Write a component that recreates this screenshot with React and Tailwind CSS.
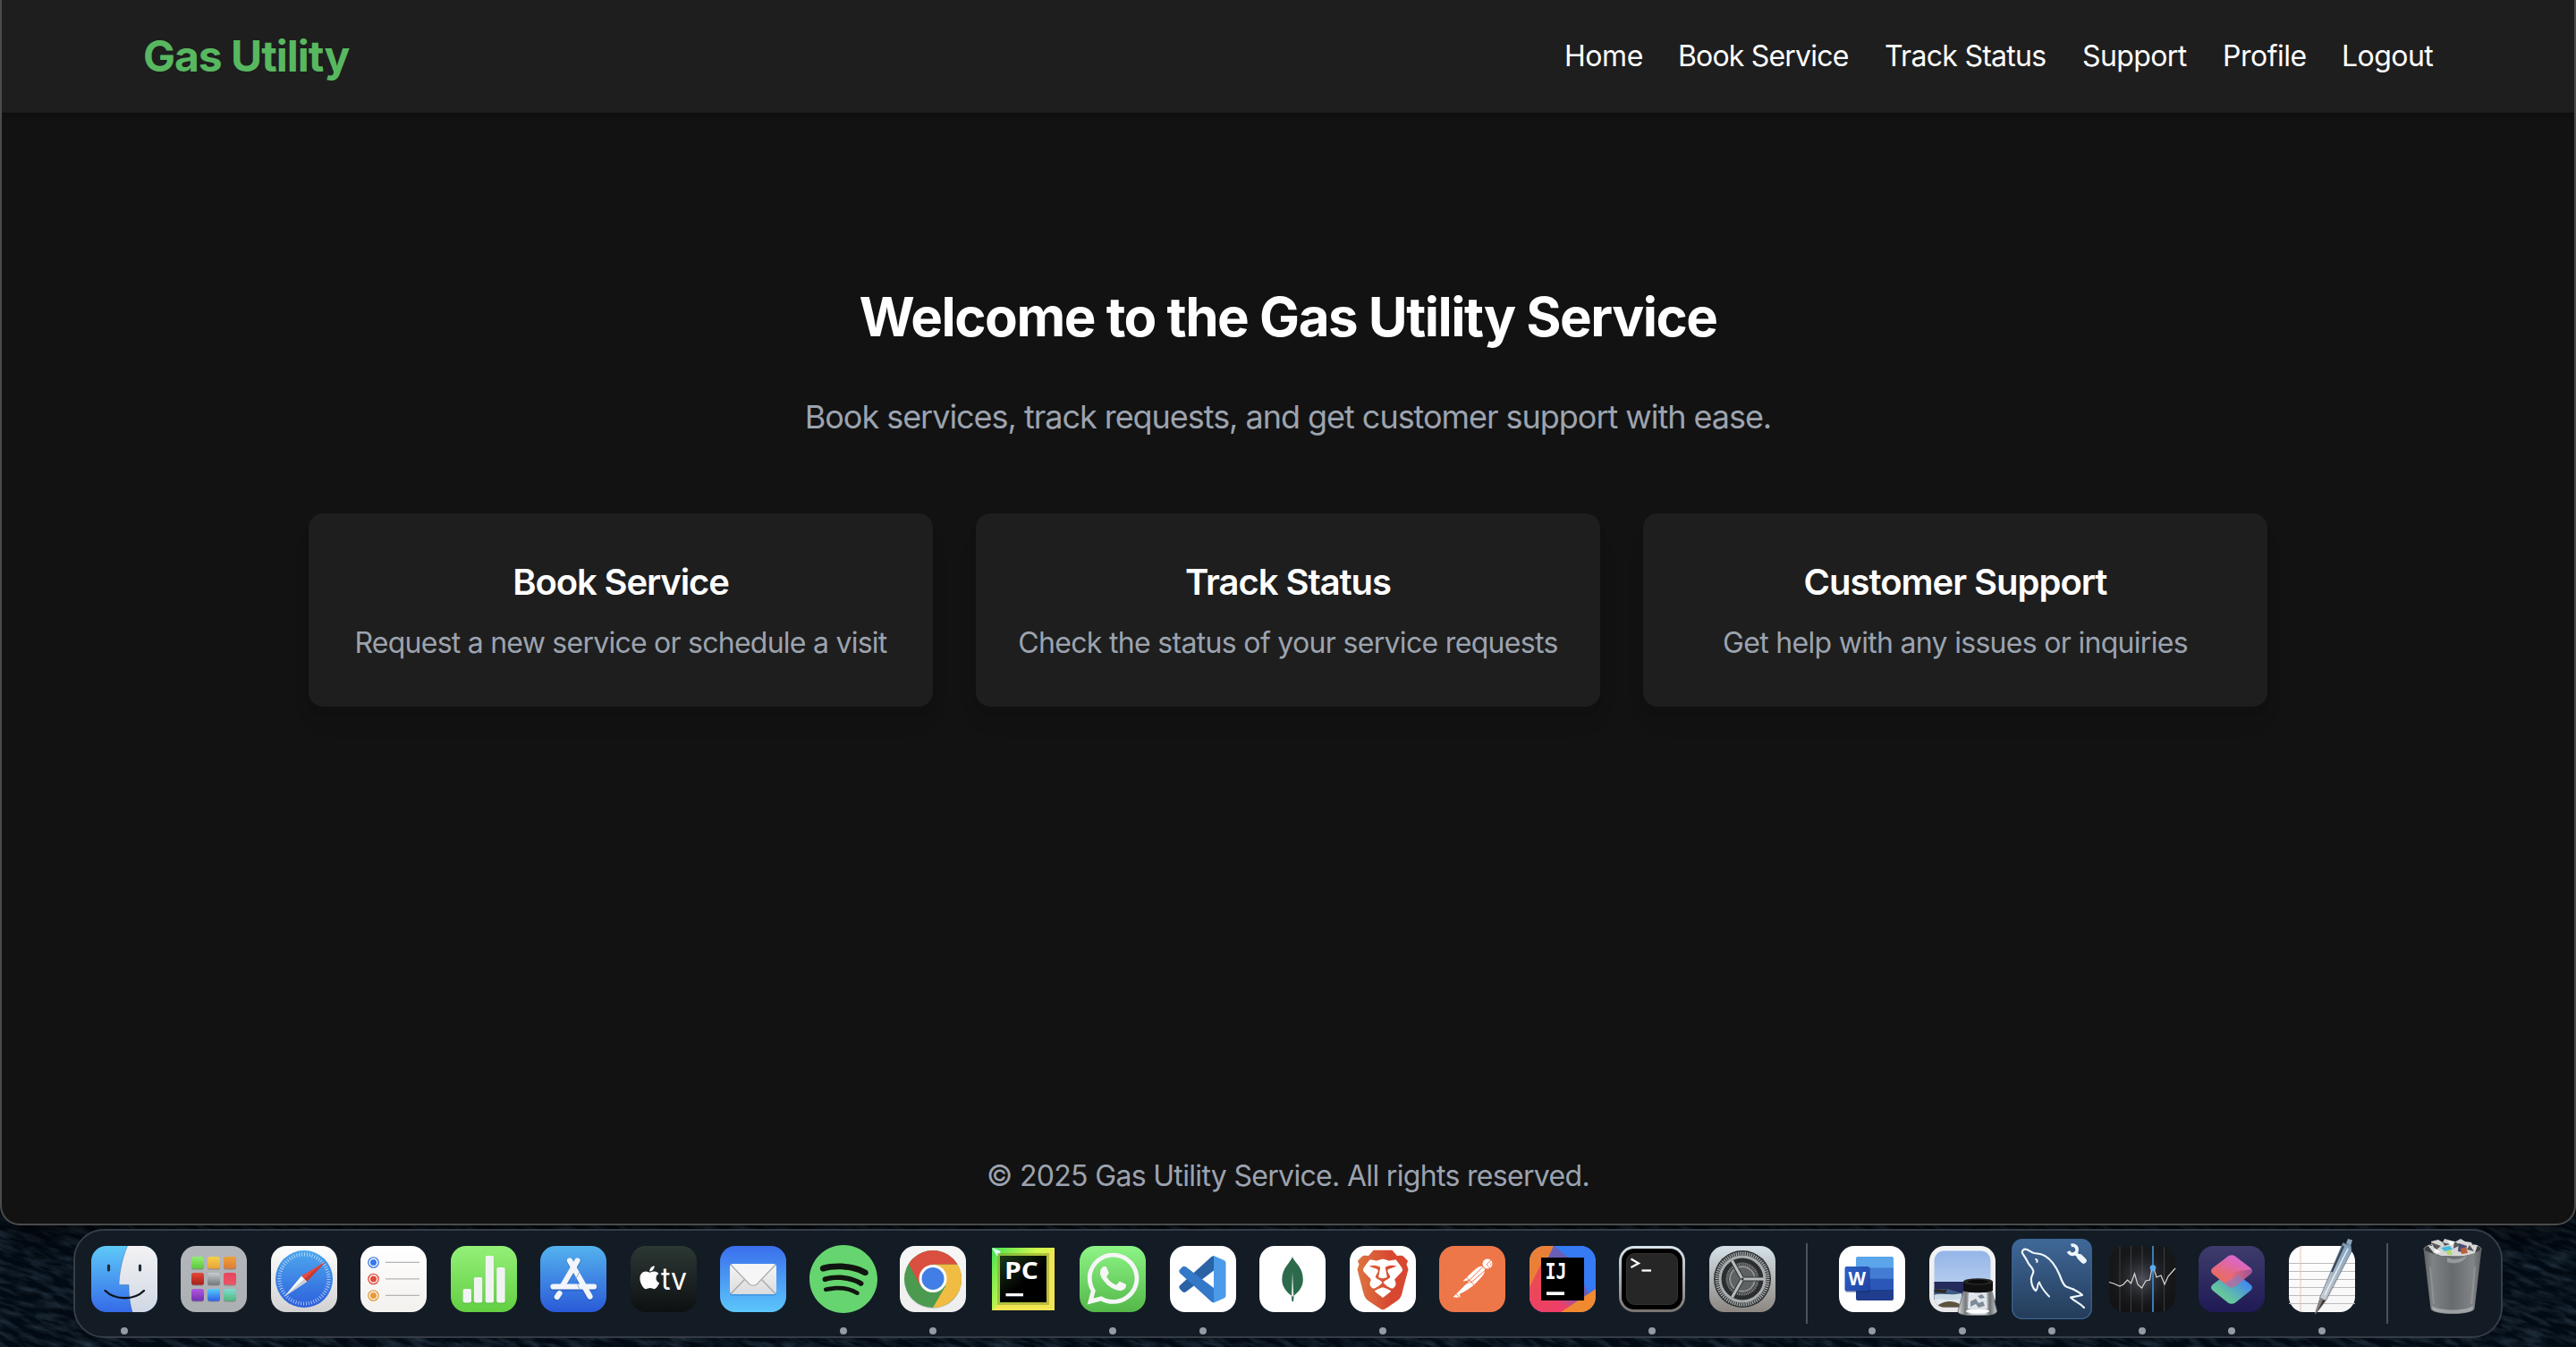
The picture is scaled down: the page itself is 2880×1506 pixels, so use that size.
import React from "react";
import { SiSpotify, SiBrave, SiPostman } from "react-icons/si";
import { FaWhatsapp, FaApple } from "react-icons/fa";

const navItems = [
  { label: "Home", cls: "w-[87px] tracking-[-0.0134em]" },
  { label: "Book Service", cls: "w-[191px] tracking-[-0.0255em]" },
  { label: "Track Status", cls: "w-[181px] tracking-[-0.0225em]" },
  { label: "Support", cls: "w-[117px] tracking-[-0.0186em]" },
  { label: "Profile", cls: "w-[93px] tracking-[-0.0149em]" },
  { label: "Logout", cls: "w-[102px] tracking-[-0.0166em]" },
];

const cards = [
  {
    title: "Book Service",
    text: "Request a new service or schedule a visit",
    titleCls: "tracking-[-0.0285em]",
    textCls: "tracking-[-0.0235em]",
  },
  {
    title: "Track Status",
    text: "Check the status of your service requests",
    titleCls: "tracking-[-0.0266em]",
    textCls: "tracking-[-0.0212em]",
  },
  {
    title: "Customer Support",
    text: "Get help with any issues or inquiries",
    titleCls: "tracking-[-0.0255em]",
    textCls: "tracking-[-0.0218em]",
  },
];

function Grad({ id, from, to, x2 = 0, y2 = 1 }) {
  return (
    <linearGradient id={id} x1="0" y1="0" x2={x2} y2={y2}>
      <stop offset="0" stopColor={from} />
      <stop offset="1" stopColor={to} />
    </linearGradient>
  );
}

function Tile({ id, from, to, children }) {
  return (
    <svg viewBox="0 0 74 74" className="block size-[74px] overflow-visible">
      <defs>
        <Grad id={id} from={from} to={to} />
        <clipPath id={id + "-clip"}>
          <rect width="74" height="74" rx="17" />
        </clipPath>
      </defs>
      <rect width="74" height="74" rx="17" fill={`url(#${id})`} />
      {children}
    </svg>
  );
}

function Finder() {
  return (
    <Tile id="finder" from="#5ec9f8" to="#356be8">
      <defs>
        <Grad id="finder-face" from="#f3f2f4" to="#d0d8e4" />
      </defs>
      <path
        clipPath="url(#finder-clip)"
        d="M40.5 0C35 13 31.500 28 31 43.500H42C42 54 43 64 46 74H74V0Z"
        fill="url(#finder-face)"
      />
      <path d="M40.500 0C35 13 31.500 28 31 43.500H42C42 54 43 64 46 74" fill="none" stroke="#244a86" strokeOpacity=".45" strokeWidth=".8" />
      <path d="M19.500 22v5M54.500 22v5" stroke="#222b35" strokeWidth="3.200" strokeLinecap="round" />
      <path d="M15.500 50C27 61 48 61 59 50" fill="none" stroke="#10151c" strokeWidth="2.400" strokeLinecap="round" />
    </Tile>
  );
}

const padColors = [
  ["#93ee72", "#5cc93c"], ["#f5cf4c", "#eaa436"], ["#eca338", "#e07a34"],
  ["#e5483a", "#a8201a"], ["#c6ced3", "#74797b"], ["#e8445f", "#ec5566"],
  ["#b058de", "#7430b4"], ["#56cdf9", "#2c5fe8"], ["#82dcd2", "#4fb87c"],
];
function Launchpad() {
  return (
    <Tile id="pad" from="#b3b6ba" to="#adb0b3">
      {padColors.map(([a, b], i) => (
        <g key={i}>
          <defs>
            <Grad id={"pad" + i} from={a} to={b} />
          </defs>
          <rect x={12 + (i % 3) * 18} y={12.500 + Math.floor(i / 3) * 18} width="14" height="14" rx="2.800" fill="#5c6064" opacity=".5" />
          <rect x={12 + (i % 3) * 18} y={12 + Math.floor(i / 3) * 18} width="14" height="13.500" rx="2.800" fill={`url(#pad${i})`} />
        </g>
      ))}
    </Tile>
  );
}

function Safari() {
  return (
    <Tile id="saf" from="#ffffff" to="#d2d2d2">
      <defs>
        <Grad id="saf-b" from="#4ea7ee" to="#2d60dc" />
      </defs>
      <circle cx="37" cy="37" r="32" fill="url(#saf-b)" />
      <circle cx="37" cy="37" r="27.500" fill="none" stroke="#fff" strokeOpacity=".7" strokeWidth="4" strokeDasharray=".8 2.079" />
      <path d="M61 17.500L34 33.500L40 40Z" fill="#e5493d" />
      <path d="M61 17.500L37 37L40 40Z" fill="#c23a37" />
      <path d="M15 56.500L34 33.500L40 40Z" fill="#fafafa" />
      <path d="M15 56.500L37 37L40 40Z" fill="#c9cfd6" />
    </Tile>
  );
}

function Reminders() {
  return (
    <Tile id="rem" from="#ffffff" to="#f3f1ee">
      {["#3578ee", "#e4493b", "#e89a37"].map((c, i) => (
        <g key={c}>
          <circle cx="14.500" cy={18.500 + i * 18.500} r="5.700" fill="none" stroke={c} strokeWidth="1.300" />
          <circle cx="14.500" cy={18.500 + i * 18.500} r="3.500" fill={c} />
          <path d={`M28 ${18.300 + i * 18.500}H66`} stroke="#b4b4b6" strokeWidth="1.300" />
        </g>
      ))}
    </Tile>
  );
}

function Numbers() {
  return (
    <Tile id="num" from="#94f078" to="#62cf42">
      {[[13.500, 48], [25.800, 35], [38.600, 11], [51.200, 24]].map(([x, y]) => (
        <g key={x}>
          <rect x={x - 0.500} y={y + 1} width="10.500" height={63.500 - y} rx="2" fill="#3f9a2a" opacity=".35" />
          <rect x={x} y={y} width="9.500" height={63.500 - y} rx="2" fill="#f1f3f2" />
        </g>
      ))}
    </Tile>
  );
}

function AppStore() {
  return (
    <Tile id="as" from="#54b2ee" to="#2a5ad8">
      <g stroke="#1c4cae" strokeOpacity=".4" strokeWidth="7" strokeLinecap="round">
        <path d="M42 17L25 45M33 17L55.500 58M14.500 47H60M21 54L18.500 58" />
      </g>
      <g stroke="#f2f5fa" strokeWidth="6.200" strokeLinecap="round">
        <path d="M33 16.500L55.500 56.500" />
        <path d="M14.500 45.500H60" />
        <path d="M41.500 16.500L25 44.500" />
        <path d="M21.500 53L18.800 57" />
      </g>
      <path d="M44 29L39.500 37M44 48L41 42" stroke="#8fb2e4" strokeWidth="1" />
    </Tile>
  );
}

function AppleTV() {
  return (
    <Tile id="tv" from="#2c3834" to="#0d1012">
      <FaApple x="6.500" y="20.500" size={29.500} color="#fff" />
      <text x="34" y="48.700" fontFamily="Inter, sans-serif" fontSize="34" fontWeight="400" fill="#fff" textLength="29" lengthAdjust="spacingAndGlyphs">tv</text>
    </Tile>
  );
}

function Mail() {
  return (
    <Tile id="mail" from="#3a6eec" to="#5cc6fb">
      <defs>
        <Grad id="mail-e" from="#f5f5f5" to="#dcdcde" />
      </defs>
      <rect x="11" y="21.500" width="52" height="34" rx="3.500" fill="#1f5fae" opacity=".35" />
      <rect x="11" y="20" width="52" height="34" rx="3.500" fill="url(#mail-e)" />
      <path d="M12.500 53L28 37M61.500 53L46 37" stroke="#a5a7aa" strokeWidth="1.200" />
      <path d="M12 21L32 42C35 45 39 45 42 42L62 21" fill="#f6f6f6" stroke="#aaacae" strokeWidth="1.200" />
    </Tile>
  );
}

function Spotify() {
  return (
    <svg viewBox="0 0 76 76" className="-my-px block size-[76px]">
      <circle cx="38" cy="38" r="36" fill="#101510" />
      <SiSpotify size={76} color="#66d56f" />
    </svg>
  );
}

function Chrome() {
  return (
    <Tile id="chr" from="#f7f7f7" to="#eeeeee">
      <circle cx="37" cy="38" r="32" fill="#000" opacity=".18" />
      <circle cx="37" cy="37" r="32" fill="#4b9a50" />
      <path d="M37 20.500H64.500A32 32 0 0 1 37 69L51 45Z" fill="#f0bc42" />
      <path d="M10 20A32 32 0 0 1 64.500 20.500H37L23 45Z" fill="#da4f3f" />
      <circle cx="37" cy="36.500" r="15.500" fill="#fff" />
      <circle cx="37" cy="36.500" r="12.500" fill="#417fe6" />
    </Tile>
  );
}

function PyCharm() {
  return (
    <svg viewBox="0 0 70 70" className="my-[2px] block size-[70px]">
      <defs>
        <linearGradient id="pc-a" x1="0" y1="0" x2="1" y2=".6">
          <stop offset="0" stopColor="#3fe05a" />
          <stop offset=".15" stopColor="#6cea4f" />
          <stop offset=".55" stopColor="#d2f94e" />
          <stop offset="1" stopColor="#f3e751" />
        </linearGradient>
        <Grad id="pc-b" from="#1d3a17" to="#000000" x2=".5" y2=".6" />
      </defs>
      <rect width="70" height="70" fill="url(#pc-a)" />
      <path d="M0 0L10 4L6 10Z" fill="#dffff0" />
      <path d="M0 70L7 63H63V7L70 0V70Z" fill="#f2e552" />
      <rect x="6" y="6" width="58" height="58" fill="#8f9a2e" opacity=".55" />
      <rect x="9" y="9" width="52" height="52" fill="url(#pc-b)" />
      <text x="14" y="34.500" fontFamily="Open Sans, sans-serif" fontSize="27" fontWeight="700" fill="#fff" textLength="38" lengthAdjust="spacingAndGlyphs">PC</text>
      <rect x="15.500" y="51" width="19.500" height="3.300" fill="#fff" />
    </svg>
  );
}

function WhatsApp() {
  return (
    <Tile id="wa" from="#8df486" to="#53b848">
      <FaWhatsapp x="4.500" y="3.500" size={66} color="#f6f6f6" />
    </Tile>
  );
}

function VSCode() {
  return (
    <Tile id="vs" from="#ffffff" to="#ffffff">
      <path d="M49 11V27.500L18 51.200Q15.500 52.800 13.500 50.800L11 48Q9.400 45.800 11.500 43.800L46.500 12Z" fill="#2a62a6" />
      <path d="M49 63.500V47L18 23.400Q15.500 21.800 13.500 23.800L11 26.500Q9.400 28.700 11.500 30.700L46.500 62.500Z" fill="#3478c8" />
      <path d="M49 11L60.500 16Q62.500 17 62.500 19V55.500Q62.500 57.500 60.500 58.500L49 63.500Z" fill="#4b9be9" />
    </Tile>
  );
}

function Mongo() {
  return (
    <Tile id="mg" from="#ffffff" to="#ffffff">
      <path d="M37 12C38.500 18 48.800 23 48.800 37.500C48.800 47 42.500 52.500 38.600 55.500L38 62H36.400L35.800 55.500C31.500 52.500 25.300 46.500 25.300 37.500C25.300 24 35.500 18 37 12Z" fill="#2c6a4c" />
      <path d="M37 29L38.300 55.500L37.200 57L35.900 55.500Z" fill="#dfe8df" />
    </Tile>
  );
}

function Brave() {
  return (
    <Tile id="br" from="#ffffff" to="#ffffff">
      <svg x="3.500" y="4.500" width="67" height="67" viewBox="0 0 24 24">
        <defs>
          <Grad id="br-g" from="#dc7440" to="#d84831" x2={0.650} y2={0} />
        </defs>
        <SiBrave x="0" y="0" size={24} style={{ fill: "url(#br-g)" }} />
      </svg>
    </Tile>
  );
}

function Postman() {
  return (
    <Tile id="pm" from="#ee7749" to="#ee7749">
      <circle cx="37" cy="37" r="32" fill="#fff" />
      <SiPostman x="1" y="1" size={72} color="#ee7749" />
    </Tile>
  );
}

function IntelliJ() {
  return (
    <Tile id="ij" from="#3a78f0" to="#3a66e0">
      <defs>
        <Grad id="ij-p" from="#e9504d" to="#ee3f66" />
        <Grad id="ij-m" from="#ee3f66" to="#3b73ee" x2={1} y2={-0.600} />
      </defs>
      <g clipPath="url(#ij-clip)">
        <path d="M27 0L0 50V74H38L74 46V74H74V0Z" fill="#367af4" />
        <path d="M27 0L10 36L45 74L66 54L50 18Z" fill="#6a5fb6" />
        <path d="M0 36L8 20L46 74H0Z" fill="url(#ij-p)" />
        <path d="M24 58H62L40 74H24Z" fill="url(#ij-m)" />
        <path d="M0 0H27L6 44L0 46Z" fill="#ea8037" />
        <path d="M0 46L13 20V74H0Z" fill="url(#ij-p)" />
        <path d="M74 48V74H35Z" fill="#f08a31" />
      </g>
      <rect x="13" y="13" width="48" height="48" fill="#000" />
      <text x="17.500" y="36.500" fontFamily="DejaVu Sans Mono, monospace" fontSize="24" fontWeight="700" fill="#fff" textLength="24" lengthAdjust="spacingAndGlyphs">IJ</text>
      <rect x="19" y="51.300" width="20" height="3.700" fill="#fff" />
    </Tile>
  );
}

function Terminal() {
  return (
    <Tile id="term" from="#d8e6ec" to="#77746f">
      <rect x="3" y="3" width="68" height="68" rx="14" fill="#000" />
      <rect x="8.500" y="8.500" width="57" height="57" rx="9" fill="#262626" stroke="#3a3a3a" strokeWidth=".8" />
      <path d="M13.500 14.500L22 19.500L13.500 24" fill="none" stroke="#fff" strokeWidth="2.200" />
      <path d="M25.500 27.500H36" stroke="#fff" strokeWidth="2.300" />
    </Tile>
  );
}

function Settings() {
  return (
    <Tile id="set" from="#d6e1e8" to="#8c8781">
      <circle cx="37" cy="37" r="32" fill="#303334" />
      <circle cx="37" cy="37" r="28.500" fill="none" stroke="#a9aeb0" strokeWidth="4" strokeDasharray="1.300 1.184" />
      <circle cx="37" cy="37" r="25" fill="none" stroke="#a8adaf" strokeWidth="3" />
      <circle cx="37" cy="37" r="22.500" fill="#2b2d2e" />
      <circle cx="37" cy="37" r="17" fill="none" stroke="#8b8f90" strokeWidth="3" strokeDasharray="1.100 .876" />
      <circle cx="37" cy="37" r="14" fill="#5f6262" stroke="#8f9394" strokeWidth="2" />
      <path d="M37 37H60M37 37L26 17.500M37 37L26 56.500" stroke="#333536" strokeWidth="5" />
      <path d="M37 37H61M37 37L25.500 16.500M37 37L25.500 57.500" stroke="#b7bcbe" strokeWidth="3" />
      <circle cx="37" cy="37" r="1.500" fill="#333" />
    </Tile>
  );
}

function Word() {
  return (
    <Tile id="wd" from="#ffffff" to="#ffffff">
      <defs>
        <clipPath id="wd-page">
          <rect x="19" y="12" width="42" height="49" rx="2" />
        </clipPath>
        <Grad id="wd-w" from="#2f5fc4" to="#1f44a4" x2={1} />
      </defs>
      <g clipPath="url(#wd-page)">
        <rect x="19" y="12" width="42" height="13" fill="#5ba5ea" />
        <rect x="19" y="24.500" width="42" height="13" fill="#437cd2" />
        <rect x="19" y="36.700" width="42" height="13" fill="#2b58b8" />
        <rect x="19" y="49" width="42" height="12" fill="#1f3d8c" />
      </g>
      <rect x="7" y="24" width="28" height="28" rx="2" fill="#0a1d50" opacity=".35" />
      <rect x="6.500" y="23" width="27.500" height="27.500" rx="2" fill="url(#wd-w)" />
      <text x="10.500" y="44.300" fontFamily="Open Sans, sans-serif" fontSize="21" fontWeight="700" fill="#fff" textLength="19.500" lengthAdjust="spacingAndGlyphs">W</text>
    </Tile>
  );
}

function Preview() {
  return (
    <Tile id="pv" from="#f4f4f4" to="#e8e8ea">
      <defs>
        <Grad id="pv-sky" from="#8fb2e8" to="#b4cbee" />
        <linearGradient id="pv-glass" x1="0" y1="0" x2="1" y2="0">
          <stop offset="0" stopColor="#d9dcde" />
          <stop offset=".2" stopColor="#75797c" />
          <stop offset=".35" stopColor="#d5d9dc" />
          <stop offset=".7" stopColor="#d5d9dc" />
          <stop offset=".82" stopColor="#6d7174" />
          <stop offset="1" stopColor="#c9cccf" />
        </linearGradient>
        <clipPath id="pv-clip2">
          <rect x="5.500" y="5.500" width="63" height="63" rx="11" />
        </clipPath>
      </defs>
      <g clipPath="url(#pv-clip2)">
        <rect width="74" height="42" fill="url(#pv-sky)" />
        <rect y="40" width="74" height="34" fill="#242a5c" />
        <path d="M0 48H20L40 54V60H0Z" fill="#3f5b86" />
        <path d="M5 49C10 47 16 50 20 48L18 53L6 52Z" fill="#2d2a2a" />
        <path d="M5 55C14 52 22 56 36 53V65H5Z" fill="#c9dbe6" />
        <path d="M5 60C14 58 24 62 36 59V70H5Z" fill="#e2ebf0" />
        <path d="M10 66C18 61 26 61 34 65V70H10Z" fill="#5d523e" />
      </g>
      <path d="M38 51H70L75.500 73C75 77 66 77.500 54 77.500S32 77 32 73Z" fill="url(#pv-glass)" stroke="#777c80" strokeWidth="1" />
      <path d="M44 52H64L65 70H43Z" fill="#dfe5ea" />
      <path d="M46 62L52 59L55 64L60 62L62 67L55 69L52 65L46 68ZM54 56L59 54L62 58L57 59Z" fill="#7e8b98" />
      <ellipse cx="54" cy="73" rx="13" ry="2.300" fill="#fff" />
      <path d="M38 40V50C42 53 66 53 71 50V40Z" fill="#101010" />
      <ellipse cx="54.500" cy="40" rx="16.500" ry="3.800" fill="#262626" />
      <ellipse cx="54.500" cy="40" rx="12" ry="2.200" fill="#0b0b0b" />
    </Tile>
  );
}

function MySQL() {
  return (
    <svg viewBox="0 0 90 90" className="-my-2 block size-[90px] shrink-0">
      <defs>
        <Grad id="my-g" from="#3f6898" to="#243c59" />
      </defs>
      <rect x=".7" y=".7" width="88.600" height="88.600" rx="11" fill="url(#my-g)" stroke="#3b6594" strokeWidth="1.200" />
      <g fill="none" stroke="#eef6fc" strokeLinejoin="round" strokeLinecap="round">
        <path strokeWidth="2.200" d="M27 58C24 56 21.500 50 22 44C22.500 40 25.500 38 24 35C22.500 31 20 30 18.500 27C17 23.500 14.500 20 12 16C11.300 12.500 14 11 17 12C20 13 22 15.500 25 16C29 16.500 33 16.500 37 19C45 23.500 50 32 53.500 40C55.500 45 57.500 52 61 53.500L69 56.500" />
        <path strokeWidth="2.200" d="M69 56.500C73 58.500 76 60 79 63C74 64.500 70 64.500 66 65.500C70 70 76 71.500 81 77" />
        <path strokeWidth="2" d="M27 58C30 56 28 51 31 48.500C33.500 56 37 59 42 64.500" />
        <path strokeWidth="2" d="M27 23C28.500 23 29 24.500 28.300 26" />
      </g>
      <path d="M70 15L79 23" stroke="#eef6fc" strokeWidth="4" />
      <path d="M76.500 20.500L80.500 24.500" stroke="#eef6fc" strokeWidth="6.500" strokeLinecap="round" />
      <path d="M66.500 7.500A5 5 0 1 1 63.500 14" fill="none" stroke="#eef6fc" strokeWidth="3.800" />
    </svg>
  );
}

function Activity() {
  return (
    <Tile id="act" from="#17181a" to="#131315">
      <defs>
        <radialGradient id="act-g">
          <stop offset="0" stopColor="#50525e" />
          <stop offset="1" stopColor="#1b1c1e" stopOpacity="0" />
        </radialGradient>
      </defs>
      <rect width="74" height="74" rx="17" fill="url(#act-g)" />
      <path d="M12 1V73M24.500 0V74M37 0V74M61.500 1V73" stroke="#55575c" strokeOpacity=".6" strokeWidth="1" />
      <path d="M49 0V74" stroke="#3f87cc" strokeWidth="1.800" />
      <path d="M0 40.500L5 42L12 45L16 43L20.500 38L24.500 42L28.500 31L32 43L36.500 47L41 39L45.500 38L47.500 27H50.500L53 35L58 33L62 43L66 34L74 25" fill="none" stroke="#d9d9d4" strokeWidth="1.200" />
      <circle cx="49" cy="24.500" r="3.300" fill="#58aef2" />
    </Tile>
  );
}

function Shortcuts() {
  return (
    <Tile id="sc" from="#3e3c6c" to="#1f1a55">
      <defs>
        <linearGradient id="sc-a" x1="0" y1="1" x2=".6" y2="0">
          <stop offset="0" stopColor="#ea6b5c" />
          <stop offset=".3" stopColor="#ea6b5c" />
          <stop offset="1" stopColor="#d866d6" />
        </linearGradient>
        <linearGradient id="sc-b" x1="0" y1="1" x2="1" y2="0">
          <stop offset="0" stopColor="#6fdc8c" />
          <stop offset=".35" stopColor="#63bfa4" />
          <stop offset=".8" stopColor="#3f86f4" />
        </linearGradient>
        <linearGradient id="sc-c" x1="0" y1="0" x2="1" y2="0">
          <stop offset=".35" stopColor="#e86a74" />
          <stop offset="1" stopColor="#854b92" />
        </linearGradient>
      </defs>
      <path d="M33 63.500L16 50Q12 46.500 16 43L33 30Q37 27.500 41 30L58 43Q62 46.500 58 50L41 63.500Q37 66 33 63.500Z" fill="url(#sc-b)" />
      <path d="M33 45L16 31.500Q12 28 16 24.500L33 11.500Q37 9 41 11.500L58 24.500Q62 28 58 31.500L41 45Q37 47.500 33 45Z" fill="url(#sc-a)" />
      <path d="M33 45L24 38L37 29.500L60 26Q60.500 29.500 58 31.500L41 45Q37 47.500 33 45Z" fill="url(#sc-c)" opacity=".75" />
      <path d="M37 46.500Q35 46.500 33 45L29 42L45 32L50 37.500L41 45Q39 46.500 37 46.500Z" fill="#7f7fc8" opacity=".6" />
    </Tile>
  );
}

function TextEdit() {
  return (
    <Tile id="te" from="#ffffff" to="#f6f6f6">
      <defs>
        <Grad id="te-p" from="#7f9fbc" to="#c9ccce" />
      </defs>
      <path d="M0 19.500H74M0 28.500H74M0 37.500H74M0 46.500H74M0 55.500H74M0 64.500H74" stroke="#bcbcbc" strokeWidth="1" />
      <path d="M13 0V74" stroke="#ecc0ba" strokeWidth="1" />
      <path d="M65 1L72 4L42 62L30 77L35 56Z" fill="#000" opacity=".15" />
      <path d="M60.500 -3.500L69.500 0L70 6L41 61L34.500 58Z" fill="url(#te-p)" stroke="#5c7083" strokeWidth=".7" />
      <path d="M64 -3L66 -8L71 -6.500L69 0Z" fill="#89a5bc" />
      <path d="M61 0L48 29" stroke="#38485a" strokeWidth="2.200" />
      <path d="M66 3L40 55" stroke="#e8f0f6" strokeWidth="1.600" />
      <path d="M34.500 58L41 61L31.500 74L29 77L30 72Z" fill="#85807f" />
      <path d="M38 60.500L41 61L31.500 74Z" fill="#3b3030" />
    </Tile>
  );
}

function Trash() {
  return (
    <svg viewBox="0 0 66 86" className="-mt-[7px] block h-[86px] w-[66px] overflow-visible">
      <defs>
        <linearGradient id="tr" x1="0" y1="0" x2="1" y2="0">
          <stop offset="0" stopColor="#5d6062" />
          <stop offset=".15" stopColor="#7f8284" />
          <stop offset=".5" stopColor="#686b6d" />
          <stop offset=".85" stopColor="#828587" />
          <stop offset="1" stopColor="#5d6062" />
        </linearGradient>
      </defs>
      <ellipse cx="33" cy="12.500" rx="32" ry="7.500" fill="#3c4043" stroke="#8a8d8f" strokeWidth="1" />
      <path d="M5 8L10 9L9 4L17 2L22 5L24 1L31 3L35 5L42 1L47 4L54 5L55 8L61 8L58 17L44 21L20 20L12 17Z" fill="#d6d6d6" />
      <path d="M9 5L20 9L14 14ZM35 4L42 8L34 12ZM52 8L57 15L49 13ZM22 5L30 7L24 9Z" fill="#56595b" />
      <path d="M20 11L30 9L33 13L24 15Z" fill="#43b8e0" />
      <path d="M25 15L31 13L33 19L28 19Z" fill="#b6d86a" />
      <path d="M40 6L49 9L47 17L39 15Z" fill="#4a4a76" />
      <path d="M42 12L48 10L50 17L43 18Z" fill="#b8603c" />
      <path d="M28 3L36 4L31 9ZM12 11L20 16L14 17Z" fill="#fff" />
      <path d="M.5 12C5 17 14 20.500 33 20.500S61 17 65.500 12L57.500 79C56 87 10 87 8.500 79Z" fill="url(#tr)" />
      <path d="M27 22C34 25 43 24 49 20C46 28 34 30 27 27Z" fill="#b3b6b8" opacity=".6" />
      <path d="M10 76C18 82 48 82 56 76L55.500 80C50 86 16 86 10.500 80Z" fill="#b8bbbd" opacity=".65" />
      <path d="M8 32L12 74M58 32L54 74" stroke="#a8abad" strokeOpacity=".4" strokeWidth="2" />
    </svg>
  );
}

const leftApps = [
  [Finder, true], [Launchpad], [Safari], [Reminders], [Numbers], [AppStore], [AppleTV], [Mail],
  [Spotify, true], [Chrome, true], [PyCharm], [WhatsApp, true], [VSCode, true], [Mongo],
  [Brave, true], [Postman], [IntelliJ], [Terminal, true], [Settings],
];
const rightApps = [
  [Word, true], [Preview, true], [MySQL, true], [Activity, true], [Shortcuts, true], [TextEdit, true],
];

function DockItem({ icon: Icon, running }) {
  return (
    <div className="flex w-[100.5px] shrink-0 flex-col items-center gap-[17px] pt-[17px]">
      <div className="flex h-[74px] items-center">
        <Icon />
      </div>
      {running && <span className="size-2 rounded-full bg-[#949ba4]" />}
    </div>
  );
}

function Wallpaper() {
  return (
    <svg className="absolute inset-x-0 bottom-0 h-[170px] w-full" preserveAspectRatio="none">
      <defs>
        <filter id="ripples" x="0" y="0" width="100%" height="100%">
          <feTurbulence type="fractalNoise" baseFrequency="0.04 0.16" numOctaves="4" seed="7" />
          <feColorMatrix values="0 0 0 0 0.09  0 0 0 0 0.16  0 0 0 0 0.23  1.500 0 0 0 -0.55" />
        </filter>
      </defs>
      <rect width="100%" height="100%" fill="#020a13" />
      <g transform="rotate(18 1440 85)" opacity=".5">
        <rect x="-200" y="-500" width="3300" height="1200" filter="url(#ripples)" />
      </g>
    </svg>
  );
}

export default function App() {
  return (
    <div className="relative flex h-[1506px] w-[2880px] flex-col overflow-hidden bg-[#020a13] font-['Inter','Liberation_Sans',sans-serif]">
      <Wallpaper />
      <div className="relative flex h-[1370px] w-full flex-col overflow-hidden rounded-b-[22px] border-2 border-t-0 border-[#4b4b4b] bg-[#121212] shadow-[0_4px_40px_rgba(0,0,0,0.9)]">
        <header className="flex h-[126px] shrink-0 items-center justify-between bg-[#1e1e1e] px-[158px] shadow-md">
          <h1 className="text-5xl/[64px] font-bold tracking-[-0.021em] whitespace-nowrap text-[#58b860]">Gas Utility</h1>
          <nav className="flex gap-10">
            {navItems.map(({ label, cls }) => (
              <a key={label} className={"text-[32px]/[48px] whitespace-nowrap text-white " + cls}>
                {label}
              </a>
            ))}
          </nav>
        </header>

        <main className="flex grow flex-col items-center pt-[192px]">
          <h2 className="text-6xl/[72px] font-bold tracking-[-0.0247em] text-white">Welcome to the Gas Utility Service</h2>
          <p className="mt-12 text-4xl/[56px] tracking-[-0.0288em] text-[#9ca3af]">
            Book services, track requests, and get customer support with ease.
          </p>
          <div className="mt-20 grid w-[2190px] grid-cols-3 gap-12">
            {cards.map((c) => (
              <section key={c.title} className="rounded-2xl bg-[#1e1e1e] pt-[49px] pb-[47px] text-center shadow-[0_20px_30px_-6px_rgba(0,0,0,0.06),0_8px_12px_-4px_rgba(0,0,0,0.06)]">
                <h3 className={"text-[40px]/[56px] font-semibold text-white " + c.titleCls}>{c.title}</h3>
                <p className={"mt-4 text-[32px]/[48px] whitespace-nowrap text-[#9ca3af] " + c.textCls}>{c.text}</p>
              </section>
            ))}
          </div>
        </main>

        <footer className="pb-[29px] text-center text-[32px]/[48px] tracking-[-0.0212em] text-[#9ca3af]">
          © 2025 Gas Utility Service. All rights reserved.
        </footer>
      </div>

      <div className="relative mx-auto mt-1 flex h-[122px] w-[2716px] shrink-0 rounded-[34px] border-2 border-[#363d46] bg-[#131b25] pl-[4.250px]">
        {leftApps.map(([icon, running], i) => (
          <DockItem key={i} icon={icon} running={running} />
        ))}
        <div className="flex w-[45px] shrink-0 justify-center pt-[14px]">
          <span className="h-[90px] w-0.5 bg-[#4c535c]" />
        </div>
        {rightApps.map(([icon, running], i) => (
          <DockItem key={i} icon={icon} running={running} />
        ))}
        <div className="flex w-[46px] shrink-0 justify-center pt-[14px]">
          <span className="h-[90px] w-0.5 bg-[#4c535c]" />
        </div>
        <DockItem icon={Trash} />
      </div>
    </div>
  );
}
